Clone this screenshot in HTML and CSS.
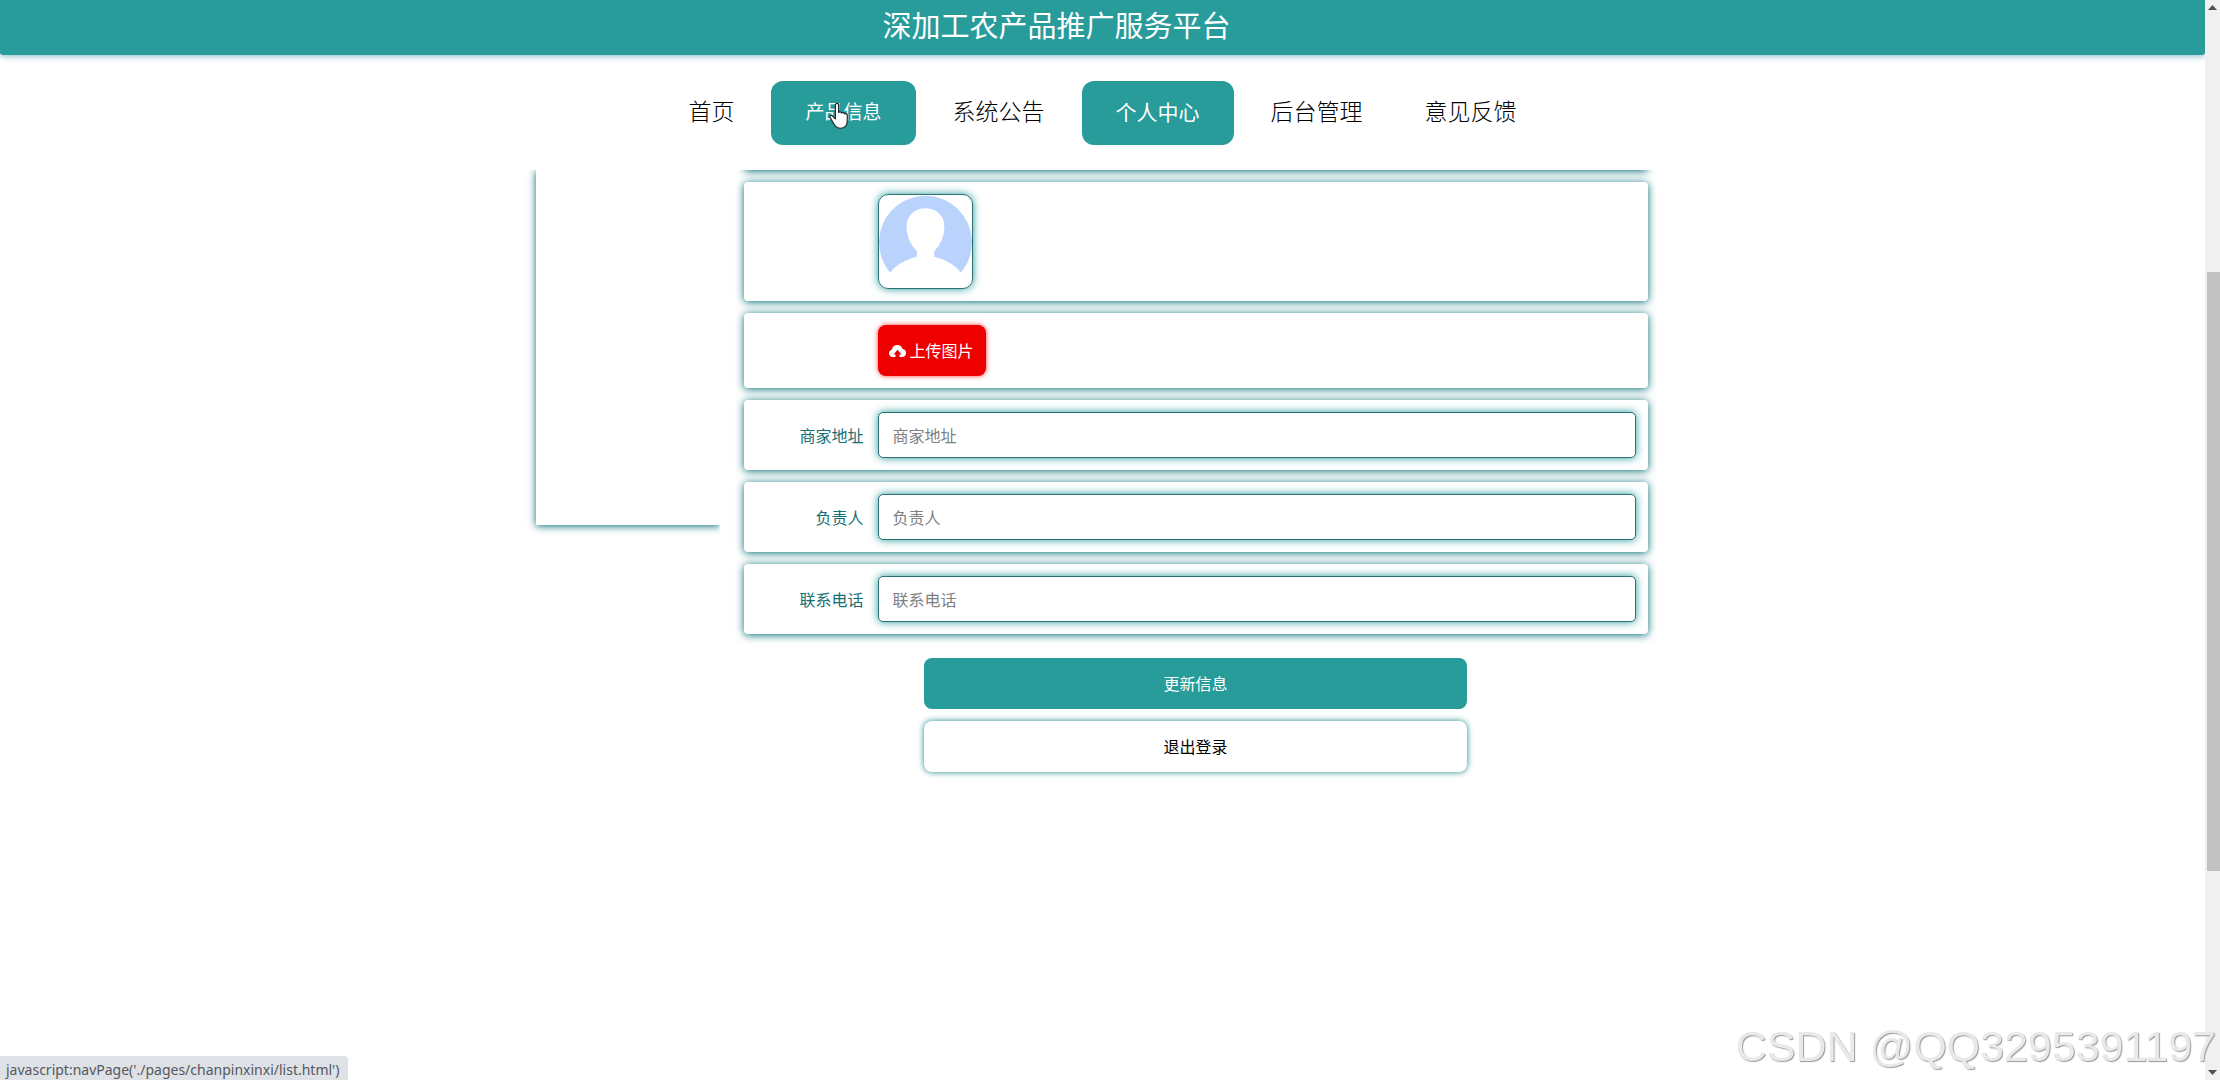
FILE: index.html
```html
<!DOCTYPE html>
<html lang="zh-CN">
<head>
<meta charset="utf-8">
<title>深加工农产品推广服务平台</title>
<link rel="stylesheet" href="styles.css">
</head>
<body>
<div class="window">
  <div class="page">
    <header class="topbar"><h1 class="topbar-title">深加工农产品推广服务平台</h1></header>
    <nav class="nav">
      <a class="nav-link" href="#home">首页</a>
      <a class="nav-link nav-hover" href="#products">产品信息
        <svg class="pointer" viewBox="0 0 22 29" aria-hidden="true"><path d="M7 2.500c0-1.200.8-1.800 1.800-1.800s1.800.7 1.800 1.800v8.200c.3-.9 3.100-.9 3.300.6.5-1 3-.8 3.200.8.7-.8 3-.4 3 1.600v5.800c0 4.800-2.300 8.500-7.400 8.500-4 0-5.500-1.600-7.300-4.700L1.300 16.300c-1-1.800 1.200-3.300 2.700-1.800l3 3.200z" fill="#fff" stroke="#222" stroke-width="1.300" stroke-linejoin="round"/></svg>
      </a>
      <a class="nav-link" href="#notices">系统公告</a>
      <a class="nav-link nav-active" href="#me">个人中心</a>
      <a class="nav-link" href="#admin">后台管理</a>
      <a class="nav-link" href="#feedback">意见反馈</a>
    </nav>
    <main class="viewport">
      <div class="layout">
        <aside class="sidebar"></aside>
        <form class="form">
          <div class="card card-scrolled"></div>
          <div class="card">
            <span class="label"></span>
            <svg class="avatar" viewBox="0 0 91 91" role="img" aria-label="头像"><path d="M11 76A45.500 45.500 0 1 1 80 76C75 69 66 63.500 54 60.500V55C60 49 64 40 64 31C64 20 56 13 45.500 13S27 20 27 31C27 40 31 49 37 55V60.500C25 63.500 16 69 11 76Z" fill="#b9d3fc"/></svg>
          </div>
          <div class="card">
            <span class="label"></span>
            <button type="button" class="upload"><svg class="cloud" viewBox="0 0 17 14" aria-hidden="true"><path fill="#fff" fill-rule="evenodd" d="M4 13C1.500 13 0 11.500 0 9.300 0 7.500 1.100 6.200 2.800 5.700 3.200 3 5.400 1 8.300 1c2.600 0 4.700 1.600 5.400 4.100C15.700 5.500 17 7 17 9c0 2.400-1.600 4-4 4h-2.500V10.500h2L8.500 5.800 4.500 10.500h2V13z"/></svg>上传图片</button>
          </div>
          <div class="card">
            <label class="label" for="address">商家地址</label>
            <input class="field" id="address" type="text" placeholder="商家地址">
          </div>
          <div class="card">
            <label class="label" for="owner">负责人</label>
            <input class="field" id="owner" type="text" placeholder="负责人">
          </div>
          <div class="card">
            <label class="label" for="phone">联系电话</label>
            <input class="field" id="phone" type="text" placeholder="联系电话">
          </div>
          <div class="actions">
            <button type="button" class="action action-primary">更新信息</button>
            <button type="button" class="action">退出登录</button>
          </div>
        </form>
      </div>
    </main>
  </div>
  <div class="scrollbar" aria-hidden="true">
    <svg class="arrow" viewBox="0 0 9 5"><path d="M0 5 4.500 0 9 5z" fill="#505050"/></svg>
    <div class="track"><div class="thumb"></div></div>
    <svg class="arrow" viewBox="0 0 9 5"><path d="M0 0 4.500 5 9 0z" fill="#505050"/></svg>
  </div>
</div>
<div class="status">javascript:navPage('./pages/chanpinxinxi/list.html')</div>
<div class="watermark">CSDN @QQ3295391197</div>
</body>
</html>
```
FILE: styles.css
```css
* { box-sizing: border-box; }

body {
  margin: 0;
  background: #fff;
  color: #111;
  font: 16px/24px "Noto Sans CJK SC", sans-serif;
}

.window { display: flex; height: 100vh; overflow: hidden; }
.page { flex: 1; min-width: 0; display: flex; flex-direction: column; }

.topbar {
  padding: 0 92px 6px 0;
  background: #289b9b;
  border-radius: 0 0 3px 3px;
  box-shadow: 0 1px 6px #7fb4c8;
  text-align: center;
}
.topbar-title { margin: 0; color: #fff; font-size: 29px; line-height: 49px; font-weight: 400; }

.nav {
  display: flex;
  justify-content: center;
  gap: 12px;
  padding: 26px 0 25px;
}
.nav-link {
  position: relative;
  padding: 0 25px 6px;
  border-radius: 12px;
  color: #000;
  font-size: 23px;
  line-height: 58px;
  font-weight: 300;
  text-decoration: none;
}
.nav-hover, .nav-active { padding: 0 34px 4px; background: #289b9b; color: #fff; font-weight: 400; line-height: 60px; }
.nav-hover { font-size: 19px; }
.nav-active { font-size: 21px; }
.pointer { position: absolute; left: 58px; top: 21px; width: 20px; height: 28px; }

.viewport { flex: 1; overflow: hidden; }
.layout { display: flex; align-items: flex-start; max-width: 1134px; margin: 0 auto; }
.sidebar {
  flex: 0 0 184px;
  height: 355px;
  box-shadow: 0 1px 8px #006d75;
  clip-path: inset(0 0 -10px -10px);
}
.form {
  flex: 1;
  min-width: 0;
  display: flex;
  flex-direction: column;
  gap: 12px;
  padding: 0 22px 0 24px;
}

.card {
  display: flex;
  align-items: center;
  padding: 12px;
  border-radius: 4px;
  background: #fff;
  box-shadow: 0 1px 8px #006d75;
}
.card-scrolled { height: 24px; margin-top: -24px; }
.label {
  flex: 0 0 122px;
  padding-right: 14px;
  color: #147075;
  text-align: right;
}
.avatar {
  width: 95px;
  height: 95px;
  border: 1px solid #2c7078;
  border-radius: 10px;
  box-shadow: 0 0 8px #289b9b;
}
.upload {
  display: flex;
  align-items: center;
  gap: 4px;
  padding: 0 12px 0 11px;
  border: 0;
  border-radius: 8px;
  background: #ee0000;
  box-shadow: 0 0 5px #ff4040;
  color: #fff;
  font: inherit;
  line-height: 51px;
}
.cloud { width: 17px; height: 14px; }
.field {
  flex: 1;
  min-width: 0;
  height: 46px;
  padding: 0 14px;
  border: 1px solid #2c7078;
  border-radius: 5px;
  background: #fff;
  box-shadow: 0 0 8px #289b9b;
  color: #333;
  font: inherit;
}
.field::placeholder { color: #808080; opacity: 1; }

.actions {
  display: flex;
  flex-direction: column;
  gap: 12px;
  width: 60%;
  margin: 12px auto 0;
}
.action {
  border: 0;
  border-radius: 8px;
  background: #fff;
  box-shadow: 0 0 6px #1d8585;
  color: #000;
  font: inherit;
  line-height: 51px;
  padding: 0;
}
.action-primary { background: #289b9b; box-shadow: none; color: #fff; }

.scrollbar {
  flex: 0 0 15px;
  display: flex;
  flex-direction: column;
  align-items: center;
  padding: 5px 0;
  background: #f0f0f0;
}
.arrow { width: 9px; height: 5px; }
.track { flex: 1; width: 100%; padding: 262px 0 0 2px; }
.thumb { height: 75%; background: #c1c1c1; }

.status {
  position: fixed;
  left: 0;
  bottom: 0;
  padding: 4px 9px 0 6px;
  border-top-right-radius: 4px;
  background: #dee1e6;
  color: #55585c;
  font: 14px/20px "Noto Sans", sans-serif;
}
.watermark {
  position: fixed;
  right: 4px;
  bottom: 8px;
  color: #e9e9e9;
  font: 43px/52px "Liberation Sans", sans-serif;
  text-shadow: 1px 1px 1px #999;
}
```
